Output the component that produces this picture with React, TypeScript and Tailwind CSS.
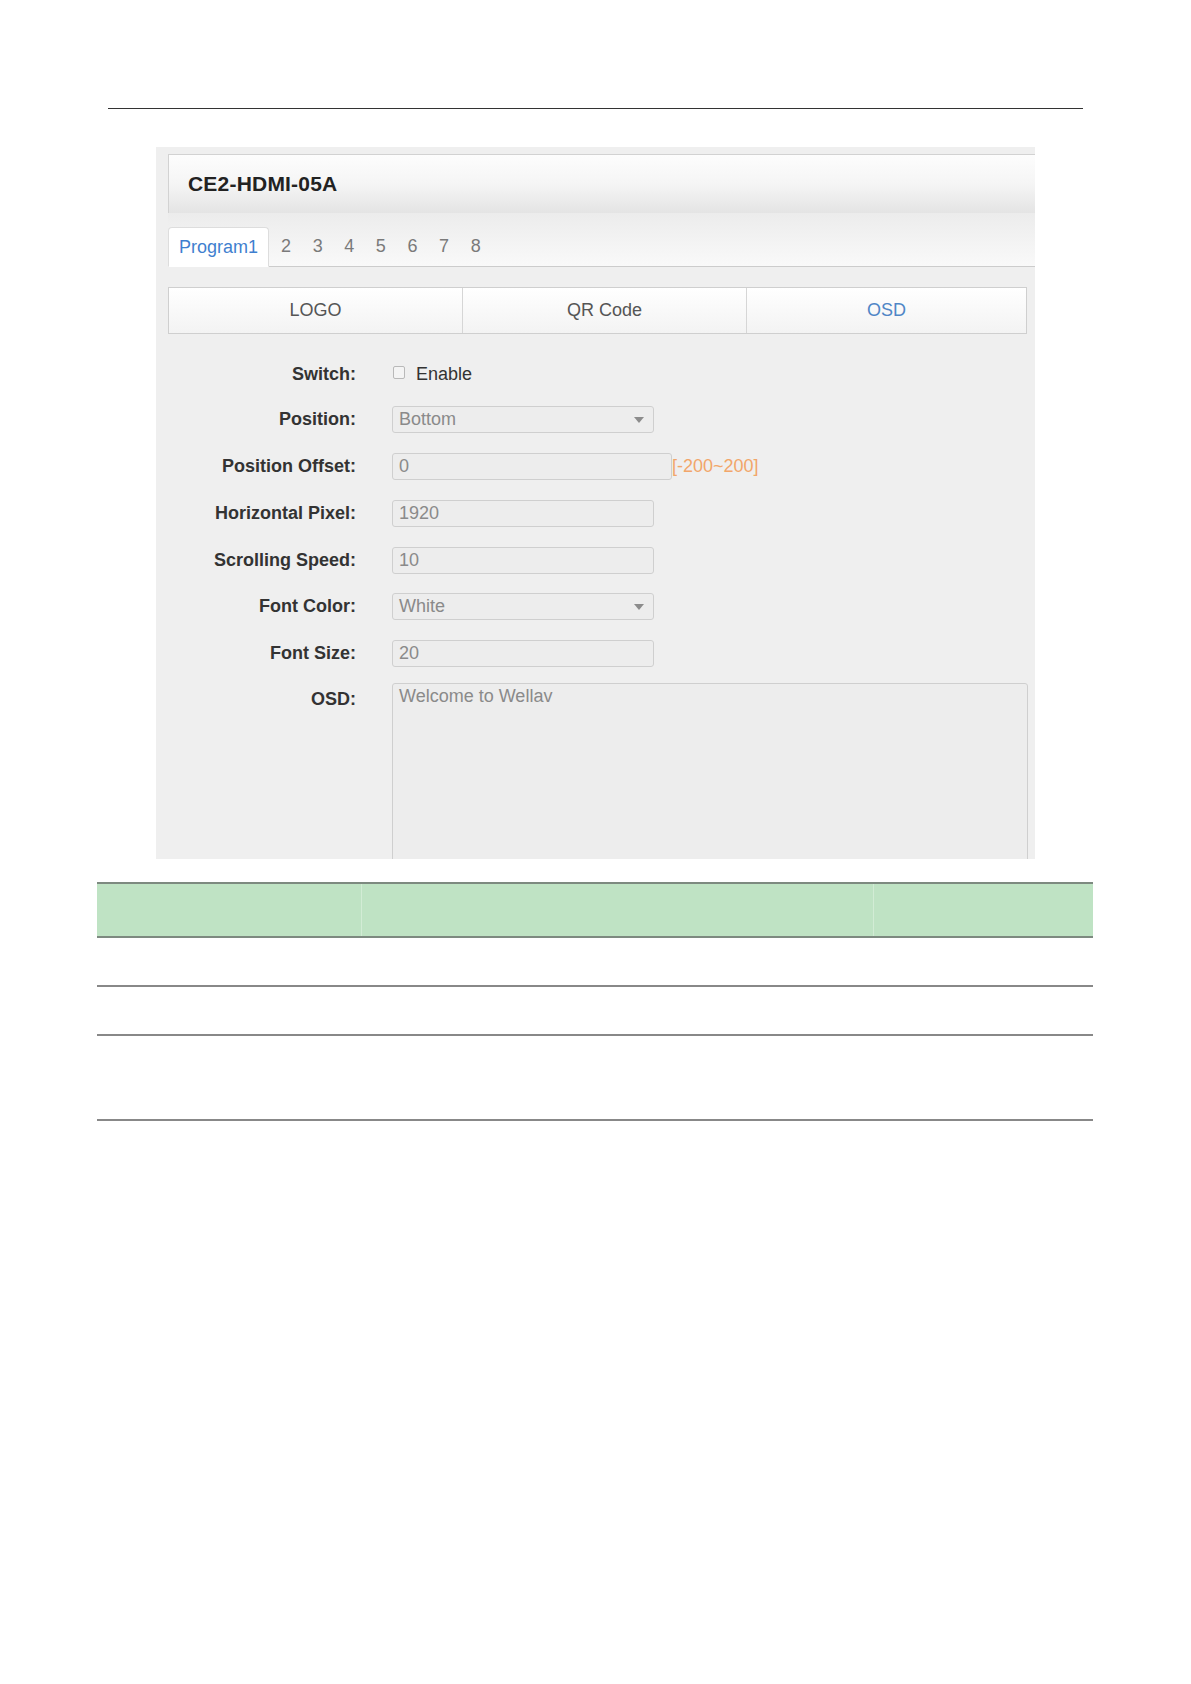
import React from "react";

const font = { fontFamily: '"Liberation Sans", Arial, sans-serif' };

interface Row {
  label: string;
  kind: "check" | "select" | "input" | "range" | "area";
  value?: string;
}

const rows: Row[] = [
  { label: "Switch:", kind: "check" },
  { label: "Position:", kind: "select", value: "Bottom" },
  { label: "Position Offset:", kind: "range", value: "0" },
  { label: "Horizontal Pixel:", kind: "input", value: "1920" },
  { label: "Scrolling Speed:", kind: "input", value: "10" },
  { label: "Font Color:", kind: "select", value: "White" },
  { label: "Font Size:", kind: "input", value: "20" },
  { label: "OSD:", kind: "area", value: "Welcome to Wellav" },
];

function Field({ row }: { row: Row }) {
  const box = "h-[27px] rounded-[3px] border border-[#cfcfcf] bg-[#ededed] pl-[6px] flex items-center text-[18px] text-[#8a8a8a]";
  if (row.kind === "check")
    return (
      <div className="flex items-center h-[27px]">
        <span className="w-[12px] h-[13px] rounded-[2px] border border-[#b9b9b9] bg-[#f4f4f4] -mt-[5px] ml-[1px]" />
        <span className="ml-[11px] text-[18px] text-[#333]">Enable</span>
      </div>
    );
  if (row.kind === "select")
    return (
      <div className={`${box} w-[262px] justify-between pr-[9px]`}>
        <span>{row.value}</span>
        <svg width="10" height="6" viewBox="0 0 10 6">
          <path d="M0 0h10L5 6z" fill="#8c8c8c" />
        </svg>
      </div>
    );
  if (row.kind === "range")
    return (
      <div className="flex items-center">
        <div className={`${box} w-[280px]`}>{row.value}</div>
        <span className="text-[18px] text-[#f2a66a]">[-200~200]</span>
      </div>
    );
  if (row.kind === "area")
    return (
      <div className="flex-1 mr-[7px] h-[190px] border border-[#cfcfcf] bg-[#ededed] rounded-t-[3px] pl-[6px] pt-[1px] text-[18px] leading-[22px] text-[#8a8a8a]">
        {row.value}
      </div>
    );
  return <div className={`${box} w-[262px]`}>{row.value}</div>;
}

export default function App() {
  return (
    <div className="min-h-[1684px] w-[1191px] bg-white" style={font}>
      <div className="pt-[108px]">
        <div className="ml-[108px] w-[975px] h-[1px] bg-[#333]" />
      </div>

      <div className="ml-[156px] mt-[38px] w-[879px] h-[712px] overflow-hidden bg-[#efefef] pl-[12px] pt-[7px]">
        <div className="h-[59px] border-t border-l border-[#d2d2d2] bg-gradient-to-b from-[#fdfdfd] via-[#f5f5f5] to-[#e4e4e4] flex items-center pl-[19px]">
          <span className="text-[21px] font-bold text-[#222] tracking-[0.2px]">CE2-HDMI-05A</span>
        </div>
        <div className="h-[54px] border-b border-[#cccccc] bg-gradient-to-b from-[#ececec] to-[#f9f9f9] flex items-end">
          <div className="h-[40px] -mb-[1px] px-[10px] mr-[2px] bg-white border border-[#dddddd] border-b-white rounded-t-[4px] flex items-center text-[18px] text-[#3f7fcf]">
            Program1
          </div>
          {["2", "3", "4", "5", "6", "7", "8"].map((n) => (
            <div key={n} className="h-[39px] px-[10px] mr-[1.6px] flex items-center text-[18px] text-[#7a7a7a]">
              {n}
            </div>
          ))}
        </div>

        <div className="mt-[20px] mr-[8px] h-[47px] flex border border-[#cfcfcf] text-[18px]">
          <div className="w-[294px] flex items-center justify-center bg-gradient-to-b from-white to-[#f3f3f3] border-r border-[#d6d6d6] text-[#555]">LOGO</div>
          <div className="w-[284px] flex items-center justify-center bg-gradient-to-b from-white to-[#f3f3f3] border-r border-[#d6d6d6] text-[#555]">QR Code</div>
          <div className="flex-1 flex items-center justify-center bg-gradient-to-b from-white to-[#f3f3f3] text-[#4f86c6]">OSD</div>
        </div>

        <div className="mt-[27px] flex flex-col gap-[20px]">
          {rows.map((row, i) => (
            <div
              key={row.label}
              className={`flex ${row.kind === "area" ? "items-start -mt-[4px]" : "items-center"} ${i === 1 ? "-mt-[2px]" : ""} ${i === 5 ? "-mt-[1px]" : ""}`}
            >
              <div className={`w-[188px] text-right text-[18px] font-bold text-[#333] ${row.kind === "area" ? "pt-[3px]" : ""}`}>
                {row.label}
              </div>
              <div className="ml-[36px] flex flex-1">
                <Field row={row} />
              </div>
            </div>
          ))}
        </div>
      </div>

      <div className="ml-[97px] mt-[23px] w-[996px]">
        <div className="h-[56px] flex border-t-2 border-b-2 border-[#7d8a80] bg-[#bfe3c4]">
          <div className="w-[265px] border-r border-[#d2ecd5]" />
          <div className="w-[512px] border-r border-[#d2ecd5]" />
          <div className="flex-1" />
        </div>
        <div className="h-[49px] border-b-2 border-[#888]" />
        <div className="h-[49px] border-b-2 border-[#888]" />
        <div className="h-[85px] border-b-2 border-[#888]" />
      </div>
    </div>
  );
}
